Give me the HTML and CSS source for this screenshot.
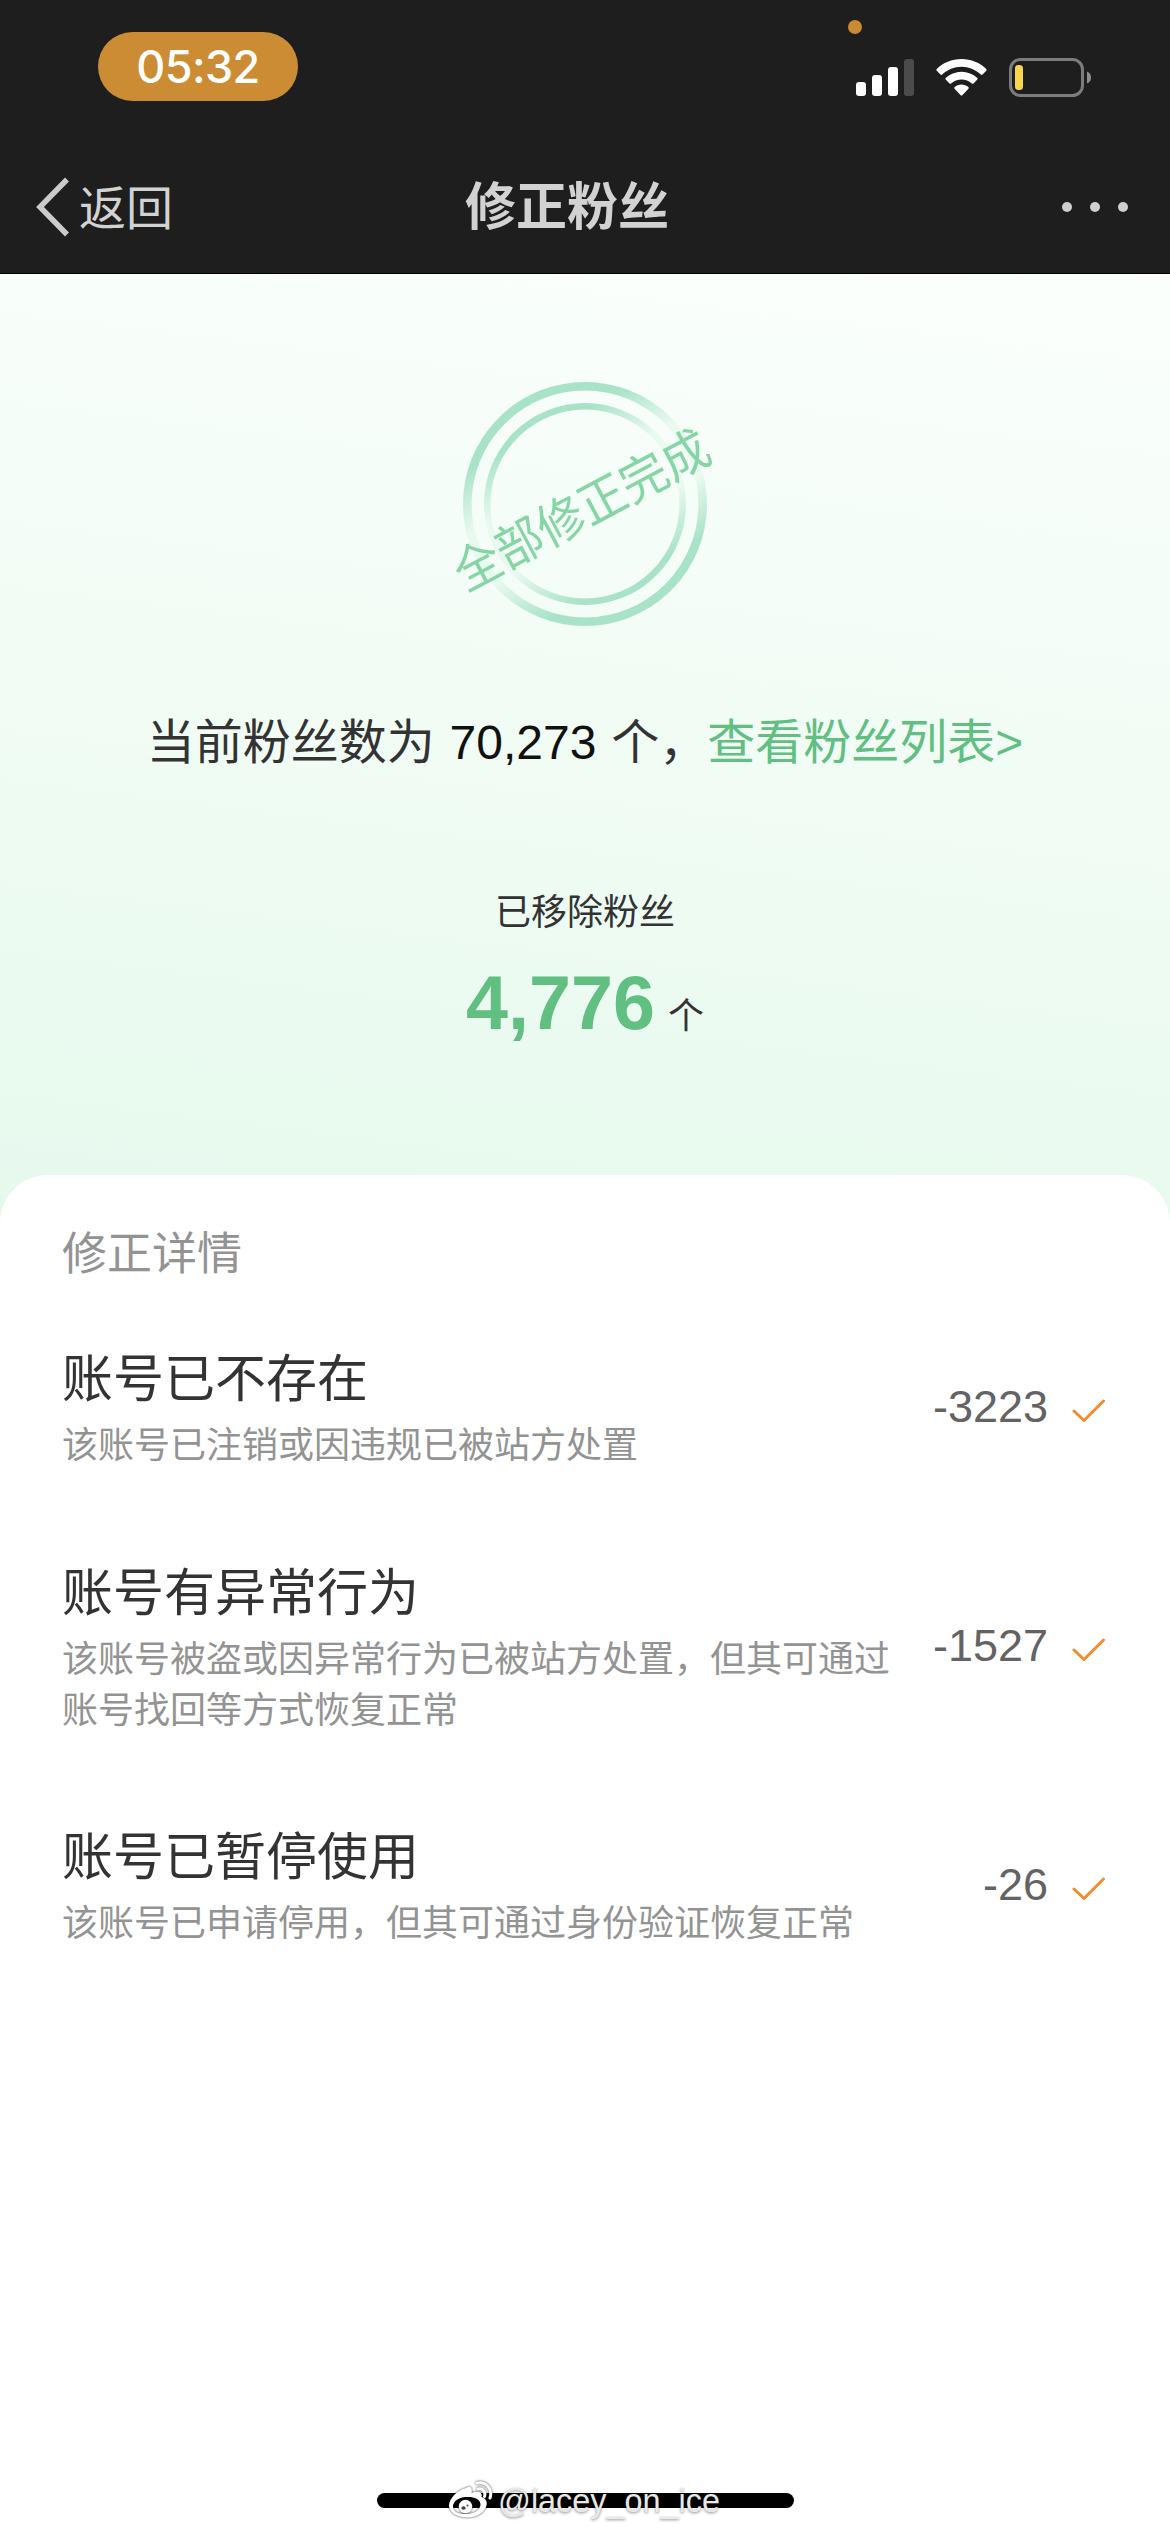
FILE: index.html
```html
<!DOCTYPE html>
<html lang="zh-CN">
<head>
<meta charset="utf-8">
<title>修正粉丝</title>
<link rel="stylesheet" href="styles.css">
</head>
<body>
<div class="screen">
  <header class="top">
    <div class="status">
      <div class="time">05:32</div>
      <div class="indicators">
        <svg class="signal" width="58" height="38" viewBox="0 0 58 38" fill="#fff"><rect x="0" y="23" width="10" height="14" rx="3"/><rect x="16" y="16" width="10" height="21" rx="3"/><rect x="32" y="8" width="10" height="29" rx="3"/><rect x="48" y="0" width="10" height="37" rx="3" fill="#4b4b4b"/></svg>
        <svg class="wifi" width="51" height="38" viewBox="0 0 51 38" fill="#fff"><path d="M25.5 0C35 0 44 3.700 50.300 10Q51 11 50.300 11.800L46.500 15.600Q45.700 16.200 44.800 15.500C39.500 10.500 32.700 7.700 25.500 7.700S11.500 10.500 6.200 15.500Q5.300 16.200 4.500 15.600L.7 11.800Q0 11 .7 10C7 3.700 16 0 25.500 0Z"/><path d="M25.500 12.800C31.500 12.800 37 15.100 41.300 19Q42 19.800 41.300 20.600L37.500 24.500Q36.700 25.200 35.800 24.500C33 22 29.400 20.600 25.500 20.600S18 22 15.200 24.500Q14.300 25.200 13.500 24.500L9.700 20.600Q9 19.800 9.700 19C14 15.100 19.500 12.800 25.500 12.800Z"/><path d="M25.500 25.600C28.100 25.600 30.500 26.500 32.400 28.100Q33.200 29 32.400 29.800L26.300 36.300Q25.500 37.200 24.700 36.300L18.600 29.800Q17.800 29 18.600 28.100C20.500 26.500 22.900 25.600 25.500 25.600Z"/></svg>
        <svg class="battery" width="83" height="40" viewBox="0 0 83 40"><rect x="1.500" y="1.500" width="72" height="36" rx="10" fill="none" stroke="#7c7c7c" stroke-width="3"/><rect x="6" y="7" width="8" height="25" rx="3.500" fill="#f8d74b"/><path d="M78 13.500Q82 15 82 19.500T78 25.500Z" fill="#8e8e8e"/></svg>
      </div>
      <span class="privacy-dot"></span>
    </div>
    <nav class="nav">
      <div class="back">
        <svg width="36" height="60" viewBox="0 0 36 60" fill="none" stroke="#cbcbcb" stroke-width="5.500"><path d="M32 2.500L5 30L32 57.500"/></svg>
        <span>返回</span>
      </div>
      <h1 class="title">修正粉丝</h1>
      <div class="more"><i></i><i></i><i></i></div>
    </nav>
  </header>
  <section class="summary">
    <div class="stamp">
      <svg width="244" height="244" viewBox="0 0 244 244" fill="none">
        <defs>
          <linearGradient id="ring" gradientUnits="userSpaceOnUse" x1="65" y1="15" x2="179" y2="229">
            <stop offset=".15" stop-color="#a8e3c8"/><stop offset=".38" stop-color="#a8e3c8" stop-opacity=".15"/><stop offset=".62" stop-color="#a8e3c8" stop-opacity=".15"/><stop offset=".85" stop-color="#a8e3c8"/>
          </linearGradient>
        </defs>
        <circle cx="122" cy="122" r="117.700" stroke="url(#ring)" stroke-width="8.600"/>
        <circle cx="122" cy="122" r="97.700" stroke="url(#ring)" stroke-width="6.500"/>
      </svg>
      <span class="stamp-text">全部修正完成</span>
    </div>
    <p class="current">当前粉丝数为 <b>70,273</b> 个，<a>查看粉丝列表&gt;</a></p>
    <p class="removed-label">已移除粉丝</p>
    <p class="removed"><strong>4,776</strong> 个</p>
  </section>
  <main class="details">
    <h2 class="heading">修正详情</h2>
    <div class="item">
      <div class="info"><h3>账号已不存在</h3><p>该账号已注销或因违规已被站方处置</p></div>
      <span class="count">-3223</span>
      <svg class="check" width="34" height="24" viewBox="0 0 34 24"><path d="M2 12L12 21.500L31.500 2"/></svg>
    </div>
    <div class="item">
      <div class="info"><h3>账号有异常行为</h3><p>该账号被盗或因异常行为已被站方处置，但其可通过账号找回等方式恢复正常</p></div>
      <span class="count">-1527</span>
      <svg class="check" width="34" height="24" viewBox="0 0 34 24"><path d="M2 12L12 21.500L31.500 2"/></svg>
    </div>
    <div class="item">
      <div class="info"><h3>账号已暂停使用</h3><p>该账号已申请停用，但其可通过身份验证恢复正常</p></div>
      <span class="count">-26</span>
      <svg class="check" width="34" height="24" viewBox="0 0 34 24"><path d="M2 12L12 21.500L31.500 2"/></svg>
    </div>
  </main>
  <footer class="home">
    <div class="home-bar"></div>
    <div class="watermark">
      <svg width="46" height="40" viewBox="0 0 46 40"><path fill-rule="evenodd" d="M18 7C22 4 25 7 23.500 12C29 9.500 35 10.500 33.500 16C38 17.500 40 21 38 26C35 33 27 37 18 36.500C8 36 1 31 1 24.500C1 18 9 9 18 7ZM18 16C10 16.500 4.500 21 5 26C5.500 31 11 33.500 19 33C27 32.500 33 28 32.500 23C32 18 26 15.500 18 16Z" fill="#fff"/><circle cx="17.500" cy="25.500" r="6.800" fill="#fff"/><ellipse cx="15.500" cy="27" rx="2.200" ry="1.800" fill="#444"/><circle cx="19.500" cy="24.500" r="1" fill="#444"/><path d="M29 2C38 0 45 8 42 17M30 8C35 7 38 11 36.500 15.500" fill="none" stroke="#fff" stroke-width="3" stroke-linecap="round"/></svg>
      <span>@lacey_on_ice</span>
    </div>
  </footer>
</div>
</body>
</html>
```
FILE: styles.css
```css
* { box-sizing: border-box; }
body {
  margin: 0;
  background: #fff;
  color: #333;
  font-family: "Liberation Sans", "Noto Sans CJK SC", sans-serif;
}
h1, h2, h3, p { margin: 0; font-weight: 400; }
svg { display: block; flex: none; }
.screen {
  width: 1170px;
  height: 2532px;
  display: flex;
  flex-direction: column;
  overflow: hidden;
}

.top {
  height: 274px;
  background: #1e1e1e;
  border-bottom: 1px solid #000;
}
.status {
  position: relative;
  height: 141px;
  padding: 32px 78px 0 98px;
  display: flex;
  justify-content: space-between;
  align-items: flex-start;
}
.time {
  width: 200px;
  height: 69px;
  border-radius: 34.5px;
  background: #cc8c33;
  color: #fff;
  font: 500 45px/70px Inter, sans-serif;
  letter-spacing: -.6px;
  text-align: center;
}
.indicators { display: flex; padding-top: 26px; }
.signal { margin: 1px 22px 0 0; }
.wifi { margin: 1px 22px 0 0; }
.privacy-dot {
  position: absolute;
  left: 848px;
  top: 20px;
  width: 14px;
  height: 14px;
  border-radius: 50%;
  background: #c98a31;
}
.nav {
  height: 132px;
  padding: 0 42px 0 35px;
  display: grid;
  grid-template-columns: 430px auto 1fr;
  align-items: center;
  color: #d2d2d2;
}
.back {
  display: flex;
  align-items: center;
  gap: 8px;
  font-size: 47px;
  line-height: 60px;
}
.back span { padding-top: 4px; }
.title { padding-top: 1px; font-size: 51px; font-weight: 700; line-height: 60px; }
.more { display: flex; justify-content: flex-end; gap: 18px; }
.more i { width: 10px; height: 10px; border-radius: 50%; background: #cfcfcf; }

.summary {
  height: 949px;
  padding-top: 108px;
  display: flex;
  flex-direction: column;
  align-items: center;
  background: linear-gradient(187deg, #fbfffc, #e6f9ed);
}
.stamp { position: relative; width: 244px; height: 244px; }
.stamp-text {
  position: absolute;
  left: 50%;
  top: 50%;
  font-size: 47px;
  line-height: 60px;
  white-space: nowrap;
  color: #86d6a5;
  transform: translate(-50%, -50%) translate(-3px, 7px) rotate(-28deg) scaleY(1.06);
}
.current { margin-top: 87px; font-size: 48px; line-height: 60px; white-space: pre; word-spacing: 1.5px; }
.current b { font-weight: 400; color: #111; }
.current a { color: #61bf82; }
.removed-label { margin-top: 115px; font-size: 36px; line-height: 50px; }
.removed { margin-top: 20px; font-size: 36px; line-height: 90px; word-spacing: 3px; }
.removed strong { font-size: 75.5px; color: #61bf82; }

.details {
  flex: 1;
  margin-top: -48px;
  padding: 50px 64px 0 62px;
  border-radius: 48px 48px 0 0;
  background: #fff;
}
.heading { margin-bottom: 57px; font-size: 45px; line-height: 60px; color: #939393; }
.item { display: flex; align-items: center; margin-bottom: 84.5px; }
.info { width: 840px; }
.info h3 { margin-bottom: 3px; font-size: 51px; line-height: 75px; }
.info p { font-size: 36px; line-height: 51px; color: #939393; }
.count { margin-left: auto; font-size: 45px; line-height: 60px; color: #636363; }
.check { margin: 8px 0 0 24px; fill: none; stroke: #f18d2f; stroke-width: 3; stroke-linecap: round; stroke-linejoin: round; }

.home {
  position: relative;
  height: 39px;
  display: flex;
  justify-content: center;
  align-items: flex-start;
}
.home-bar { width: 417px; height: 15px; border-radius: 8px; background: #000; }
.watermark {
  position: absolute;
  left: 448px;
  top: -12px;
  display: flex;
  align-items: center;
  gap: 4px;
  color: #e8e8e8;
  font-size: 32.4px;
  line-height: 40px;
  text-shadow: 0 1px 3px rgba(0, 0, 0, .45);
}
.watermark svg { filter: drop-shadow(0 0 1px rgba(0, 0, 0, .8)); }
```
